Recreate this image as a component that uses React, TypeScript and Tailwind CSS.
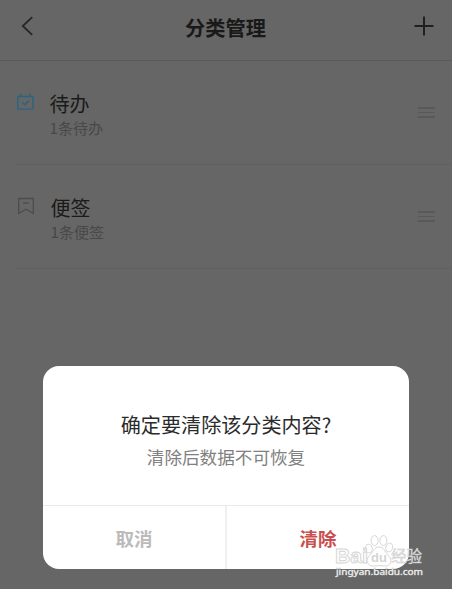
import React, { useState } from "react";

const TodoIcon = () => (
  <svg width="18" height="18" viewBox="0 0 18 18" fill="none" stroke="#2b6480" strokeWidth="1.4">
    <rect x="1.7" y="3.5" width="15.3" height="12.6" rx="0.6" />
    <path d="M5 0.5v3M13.9 0.5v3" />
    <path d="M6.2 9.2l2.4 2.4 4.4-4" strokeWidth="1.6" />
  </svg>
);

const NoteIcon = () => (
  <svg width="18" height="18" viewBox="0 0 18 18" fill="none" stroke="#4c4c4c" strokeWidth="1.3">
    <path d="M1.7 1.5h14.6v15l-7.3-4.3-7.3 4.3z" strokeLinejoin="round" />
    <path d="M6 6h6" />
  </svg>
);

const DragHandle = () => (
  <div className="flex flex-col gap-[3px]">
    <span className="block h-[1.5px] w-[17px] bg-[#595959]" />
    <span className="block h-[1.5px] w-[17px] bg-[#595959]" />
    <span className="block h-[1.5px] w-[17px] bg-[#595959]" />
  </div>
);

const categories = [
  { id: "todo", name: "待办", count: "1条待办", icon: <TodoIcon />, indent: "pl-4" },
  { id: "note", name: "便签", count: "1条便签", icon: <NoteIcon />, indent: "pl-[17px]" },
];

const Watermark = () => (
  <div className="pointer-events-none absolute left-[334px] top-[532px] w-[92px]">
    <svg width="92" height="48" viewBox="0 0 92 48">
      <g fill="#ffffff" fillOpacity="0.75" stroke="#d6d6d6" strokeWidth="1">
        <ellipse cx="34.8" cy="16.5" rx="3.3" ry="4.4" transform="rotate(-15 34.8 16.5)" />
        <ellipse cx="40.6" cy="8.6" rx="3.5" ry="5" />
        <ellipse cx="49.4" cy="8.6" rx="3.5" ry="5" />
        <ellipse cx="55.2" cy="15.5" rx="3.3" ry="4.4" transform="rotate(15 55.2 15.5)" />
        <path d="M45 15c-5 0-5.5 4.5-9.5 8.5-5 4.5-2 11 4 10.5 3.500-.5 7.500-.5 11 0 6 .5 8.500-5.500 4-10.500C50.500 19.500 50 15 45 15z" />
      </g>
      <g fontFamily="'Liberation Sans', 'Noto Sans CJK SC', sans-serif" fontWeight="bold">
        <text x="1" y="30.5" fontSize="20" fill="#ffffff" stroke="#d4d4d4" strokeWidth="0.9" textLength="33" lengthAdjust="spacingAndGlyphs">Bai</text>
        <text x="37" y="30" fontSize="13" fill="#d4d4d4">du</text>
        <text x="57" y="29.5" fontSize="15.5" fill="#e6e6e6" stroke="#c8c8c8" strokeWidth="0.4" fontWeight="normal" textLength="31">经验</text>
      </g>
      <text x="2" y="43" fontSize="9.5" fontFamily="'Noto Sans', sans-serif" fill="#eeeeee" stroke="#b4b4b4" strokeWidth="0.7" paintOrder="stroke" textLength="87" lengthAdjust="spacingAndGlyphs">jingyan.baidu.com</text>
    </svg>
  </div>
);

export default function App() {
  const [open, setOpen] = useState(true);

  return (
    <div className="relative h-[589px] w-[452px] overflow-hidden bg-[#666666] font-['Noto_Sans_CJK_SC',sans-serif]">
      <header className="flex h-[61px] items-start justify-between border-b border-[#5a5a5a] pl-[21px] pr-[18px]">
        <button className="mt-4 w-4" aria-label="返回">
          <svg width="13" height="20" viewBox="0 0 13 20" fill="none" stroke="#262626" strokeWidth="1.8">
            <path d="M11.2 1.2L1.8 10l9.4 8.8" />
          </svg>
        </button>
        <h1 className="mt-[14px] text-[20.2px] font-bold leading-7 text-[#191919]">分类管理</h1>
        <button className="mt-4" aria-label="添加">
          <svg width="20" height="20" viewBox="0 0 20 20" stroke="#202020" strokeWidth="2">
            <path d="M10 0.5v19M0.5 10h19" />
          </svg>
        </button>
      </header>

      <ul>
        {categories.map((item) => (
          <li key={item.id} className="ml-4 flex h-[104px] border-b border-[#606060] pr-[17px]">
            <div className={`-ml-4 flex flex-1 pt-[29px] ${item.indent}`}>
              <div className="mt-[3px]">{item.icon}</div>
              <div className="ml-[15.5px]">
                <p className="text-[20px] leading-[27px] text-[#1a1a1a]">{item.name}</p>
                <p className="text-[15.1px] leading-[20px] text-[#484848]">{item.count}</p>
              </div>
            </div>
            <div className="mt-[46px]">
              <DragHandle />
            </div>
          </li>
        ))}
      </ul>

      {open && (
        <div className="absolute left-[43px] top-[366px] flex h-[203px] w-[366px] flex-col overflow-hidden rounded-2xl bg-white">
          <div className="flex-1 pt-[45px] text-center">
            <p className="text-[20.1px] leading-[28px] text-[#2b2b2b]">确定要清除该分类内容?</p>
            <p className="mt-[5px] text-[17.6px] leading-[26px] text-[#808080]">清除后数据不可恢复</p>
          </div>
          <div className="flex h-16 border-t border-[#e9e9e9] text-[18.5px] font-bold">
            <button className="w-[184px] border-r-2 border-[#f0f0f0] pt-0.5 text-[#bbbbbb]" onClick={() => setOpen(false)}>
              取消
            </button>
            <button className="flex-1 pt-0.5 text-[#c94f4f]" onClick={() => setOpen(false)}>
              清除
            </button>
          </div>
        </div>
      )}

      <Watermark />
    </div>
  );
}
